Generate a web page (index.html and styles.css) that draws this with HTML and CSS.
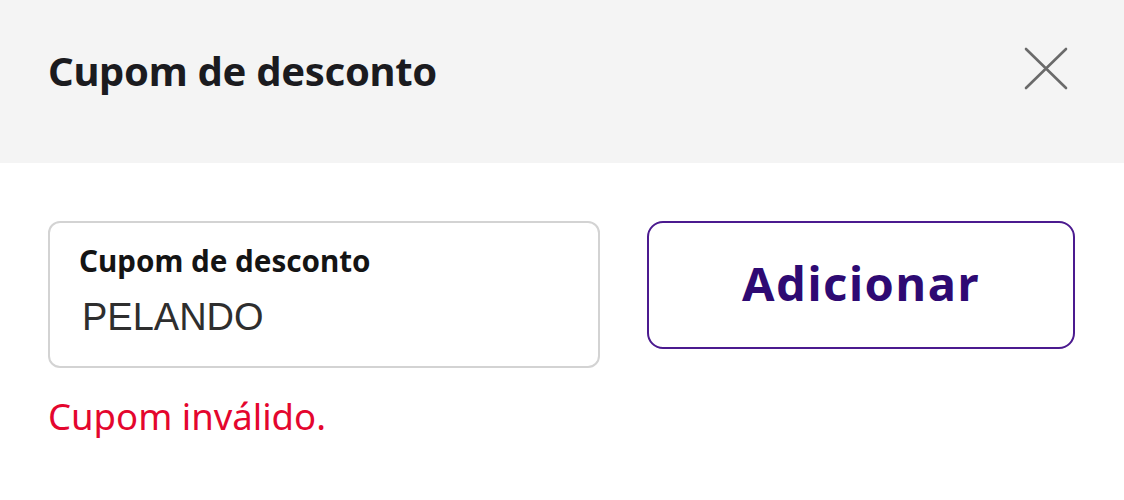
FILE: index.html
```html
<!DOCTYPE html>
<html lang="pt-BR">
<head>
<meta charset="utf-8">
<title>Cupom de desconto</title>
<link rel="stylesheet" href="styles.css">
</head>
<body>
<div class="modal">
  <header class="modal-header">
    <h1 class="modal-title">Cupom de desconto</h1>
    <button class="close-btn" aria-label="Fechar">
      <svg width="44" height="44" viewBox="0 0 44 44" aria-hidden="true">
        <path d="M2 3 L42 42 M42 3 L2 42" stroke="#6a6a6a" stroke-width="2.6" stroke-linecap="round" fill="none"/>
      </svg>
    </button>
  </header>
  <section class="modal-body">
    <div class="coupon-row">
      <div class="coupon-col">
        <label class="field">
          <span class="field-label">Cupom de desconto</span>
          <span class="field-value">PELANDO</span>
        </label>
        <p class="error">Cupom inválido.</p>
      </div>
      <button class="add-btn">Adicionar</button>
    </div>
  </section>
</div>
</body>
</html>
```
FILE: styles.css
```css
* { box-sizing: border-box; }
html, body { margin: 0; padding: 0; background: #ffffff; }
body { font-family: "Noto Sans", "Open Sans", sans-serif; }

.modal { width: 1124px; }

.modal-header {
  height: 163px;
  background: #f4f4f4;
  display: flex;
  justify-content: space-between;
  align-items: flex-start;
  padding: 0 56px 0 48px;
}

.modal-title {
  margin: 47px 0 0;
  font-size: 40px;
  line-height: 48px;
  font-weight: 700;
  letter-spacing: -0.3px;
  color: #1b1b1f;
}

.close-btn {
  margin-top: 46px;
  padding: 0;
  border: 0;
  background: transparent;
  width: 44px;
  height: 44px;
  display: block;
}
.close-btn svg { display: block; }

.modal-body { padding: 58px 49px 0 48px; }

.coupon-row {
  display: flex;
  align-items: flex-start;
  gap: 47px;
}

.coupon-col { width: 552px; }

.field {
  display: flex;
  flex-direction: column;
  height: 147px;
  border: 2px solid #d3d3d3;
  border-radius: 12px;
  padding: 20px 20px 0 29px;
  background: #fff;
}

.field-label {
  font-size: 29.6px;
  line-height: 36px;
  font-weight: 700;
  color: #141414;
}

.field-value {
  margin-top: 16px;
  font-family: "Liberation Sans", Arial, sans-serif;
  font-size: 38px;
  line-height: 44px;
  color: #2e2e2e;
  padding-left: 3px;
}

.error {
  margin: 26px 0 0;
  font-size: 36.5px;
  line-height: 44px;
  color: #e4062e;
}

.add-btn {
  width: 428px;
  height: 128px;
  border: 2px solid #4b1a8f;
  border-radius: 16px;
  background: #fff;
  font-family: "Noto Sans", "Open Sans", sans-serif;
  font-size: 47px;
  font-weight: 700;
  letter-spacing: 1.6px;
  color: #2e0a73;
  display: flex;
  align-items: center;
  justify-content: center;
  padding: 0 0 4px;
}
```
